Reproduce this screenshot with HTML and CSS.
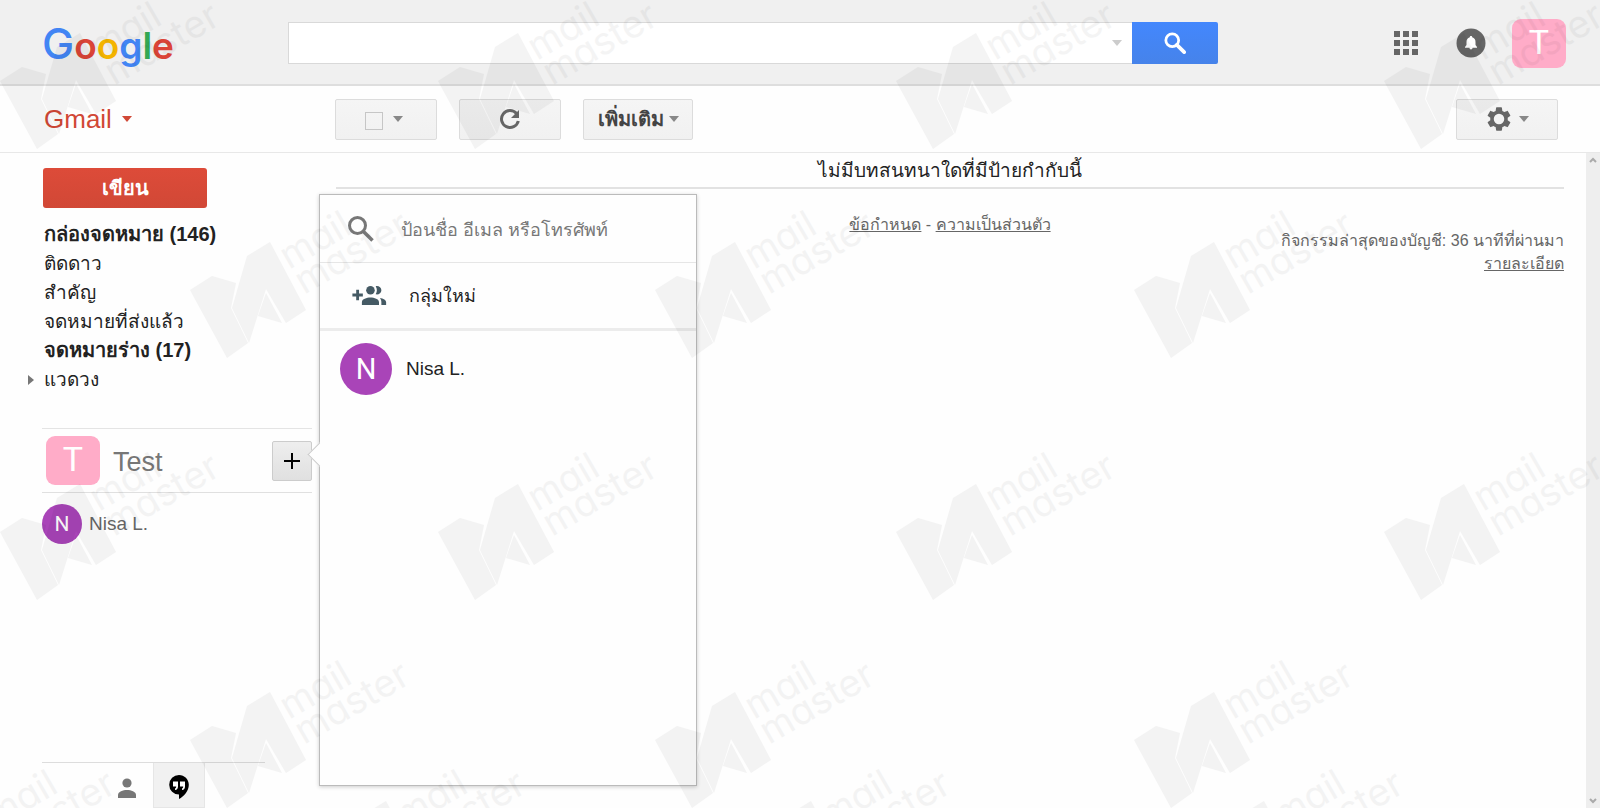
FILE: index.html
```html
<!DOCTYPE html>
<html lang="th">
<head>
  <meta charset="UTF-8">
  <meta name="viewport" content="width=device-width, initial-scale=1.0">
  <title>Gmail</title>
  <link rel="stylesheet" href="styles.css">
</head>
<body>
  <header class="header">
    <a href="#" class="logo" aria-label="Google"><span class="blue capital">G</span><span class="red">o</span><span class="yellow">o</span><span class="blue">g</span><span class="green">l</span><span class="red">e</span></a>
    <form class="search">
      <div class="search-box">
        <input type="text" aria-label="ค้นหา">
        <button type="button" class="search-more" aria-label="ตัวเลือกการค้นหา"><span class="caret light"></span></button>
      </div>
      <button type="button" class="search-btn" aria-label="ค้นหา">
        <svg width="22" height="22" viewBox="0 0 24 24" fill="none" stroke="#fff"><circle cx="9" cy="9" r="7" stroke-width="3"/><path d="M14 14l8 8" stroke-width="4" stroke-linecap="round"/></svg>
      </button>
    </form>
    <div class="header-right">
      <a href="#" aria-label="แอป">
        <svg class="icon" width="24" height="24" viewBox="0 0 24 24" fill="#666"><path d="M0 0h6v6H0zM9 0h6v6H9zM18 0h6v6h-6zM0 9h6v6H0zM9 9h6v6H9zM18 9h6v6h-6zM0 18h6v6H0zM9 18h6v6H9zM18 18h6v6h-6z"/></svg>
      </a>
      <a href="#" aria-label="การแจ้งเตือน">
        <svg class="icon" width="30" height="30" viewBox="0 0 30 30"><circle cx="15" cy="15" r="14.5" fill="#666"/><path fill="#fff" d="M15 8c.8 0 1.200.5 1.200 1.200 2.200.6 3.300 2.300 3.300 4.500v3.300l1.500 2v.8H9v-.8l1.500-2v-3.300c0-2.200 1.100-3.900 3.300-4.500 0-.7.400-1.200 1.200-1.200zM13.500 19.800h3c0 1-.6 1.700-1.500 1.700s-1.500-.7-1.500-1.700z"/></svg>
      </a>
      <a href="#" class="avatar square">T</a>
    </div>
  </header>

  <div class="toolbar">
    <a href="#" class="gmail">Gmail <span class="caret red-caret"></span></a>
    <div class="tools">
      <div class="tool select">
        <input type="checkbox" class="check" aria-label="เลือก">
        <button type="button" class="bare" aria-label="ตัวเลือก"><span class="caret"></span></button>
      </div>
      <button type="button" class="tool" aria-label="รีเฟรช">
        <svg width="22" height="22" viewBox="0 0 22 22"><path d="M17.500 5.500A8.500 8.500 0 1 0 19.300 13" fill="none" stroke="#666" stroke-width="3"/><path d="M20 2v8h-8z" fill="#666"/></svg>
      </button>
      <button type="button" class="tool more">เพิ่มเติม <span class="caret"></span></button>
    </div>
    <button type="button" class="tool settings" aria-label="การตั้งค่า">
      <svg width="28" height="28" viewBox="0 0 24 24" fill="#666"><path d="M19.430 12.980c.04-.32.070-.64.070-.98s-.03-.66-.07-.98l2.110-1.650c.19-.15.240-.42.120-.64l-2-3.460c-.12-.22-.39-.3-.61-.22l-2.490 1c-.52-.4-1.080-.73-1.690-.98l-.38-2.650C14.460 2.180 14.250 2 14 2h-4c-.25 0-.46.180-.49.420l-.38 2.650c-.61.250-1.170.590-1.690.980l-2.490-1c-.23-.09-.49 0-.61.220l-2 3.460c-.13.220-.07.490.120.640l2.110 1.650c-.04.320-.07.650-.07.980s.03.660.070.980l-2.110 1.650c-.19.150-.24.420-.12.640l2 3.460c.12.220.390.300.610.220l2.490-1c.52.400 1.080.730 1.690.980l.38 2.650c.03.240.240.420.490.420h4c.25 0 .46-.18.490-.42l.38-2.650c.61-.25 1.170-.59 1.690-.98l2.490 1c.23.090.490 0 .61-.22l2-3.460c.12-.22.070-.49-.12-.64l-2.110-1.650zM12 16.500a4.500 4.500 0 1 1 0-9 4.500 4.500 0 0 1 0 9z"/></svg>
      <span class="caret"></span>
    </button>
  </div>

  <div class="content">
    <aside class="sidebar">
      <button type="button" class="compose">เขียน</button>
      <nav class="folders">
        <a href="#" class="unread">กล่องจดหมาย (146)</a>
        <a href="#">ติดดาว</a>
        <a href="#">สำคัญ</a>
        <a href="#">จดหมายที่ส่งแล้ว</a>
        <a href="#" class="unread">จดหมายร่าง (17)</a>
        <a href="#" class="expand">แวดวง</a>
      </nav>
      <div class="chat-user">
        <span class="avatar square">T</span>
        <span class="chat-name">Test</span>
        <button type="button" class="add" aria-label="เริ่มแชท">
          <svg width="16" height="16" viewBox="0 0 16 16" fill="#000"><path d="M7 0h2v7h7v2H9v7H7V9H0V7h7z"/></svg>
        </button>
      </div>
      <a href="#" class="chat-item"><span class="avatar round">N</span>Nisa L.</a>
      <div class="chat-tabs">
        <button type="button" class="tab" aria-label="รายชื่อติดต่อ">
          <svg width="18" height="20" viewBox="0 0 18 20" fill="#777"><circle cx="9" cy="5" r="4.600"/><path d="M0 20v-3c0-3.500 5-5 9-5s9 1.500 9 5v3z"/></svg>
        </button>
        <button type="button" class="tab active" aria-label="แฮงเอาท์">
          <svg width="20" height="24" viewBox="0 0 20 24"><path d="M10 0a9.800 9.800 0 0 0 0 19.600V24c5-2.500 9.800-8 9.800-14.200C19.800 4.400 15.400 0 10 0z"/><path fill="#fff" d="M4 6.500h5v5c0 2-1 3.300-3 3.500v-1.500c.8-.2 1.200-.8 1.200-2H4zM11 6.500h5v5c0 2-1 3.300-3 3.500v-1.500c.8-.2 1.200-.8 1.200-2H11z"/></svg>
        </button>
      </div>
    </aside>

    <main class="main">
      <p class="empty">ไม่มีบทสนทนาใดที่มีป้ายกำกับนี้</p>
      <div class="footer">
        <p class="terms"><a href="#">ข้อกำหนด</a> - <a href="#">ความเป็นส่วนตัว</a></p>
        <p class="activity">กิจกรรมล่าสุดของบัญชี: 36 นาทีที่ผ่านมา<br><a href="#">รายละเอียด</a></p>
      </div>
    </main>

    <div class="scrollbar">
      <svg width="8" height="6" viewBox="0 0 8 6" fill="none" stroke="#aaa" stroke-width="2"><path d="M1 5l3-3 3 3"/></svg>
      <svg width="8" height="6" viewBox="0 0 8 6" fill="none" stroke="#aaa" stroke-width="2"><path d="M1 1l3 3 3-3"/></svg>
    </div>

    <div class="popup">
      <div class="popup-search">
        <svg width="26" height="26" viewBox="0 0 26 26" fill="none" stroke="#777"><circle cx="9.500" cy="9.500" r="8" stroke-width="3"/><path d="M15.500 15.500l9 9" stroke-width="3.500"/></svg>
        <input type="text" aria-label="ค้นหาผู้ติดต่อ" placeholder="ป้อนชื่อ อีเมล หรือโทรศัพท์">
      </div>
      <button type="button" class="new-group">
        <svg width="35" height="19" viewBox="0 0 36 20" fill="#455a64"><path d="M4 4h3v4h4v3H7v4H4v-4H0V8h4z"/><circle cx="19" cy="4.500" r="4.500"/><path d="M10 20v-3c0-3.500 5-5 9-5s9 1.500 9 5v3zM24.500.2c3-.8 6 1.300 6 4.300s-3 5.100-6 4.300c1.700-2.600 1.700-6 0-8.600zM29 12.500c3.500.5 6.500 2 6.500 4.500v3h-5v-3c0-1.800-.5-3.300-1.500-4.500z"/></svg>
        กลุ่มใหม่
      </button>
      <a href="#" class="contact"><span class="avatar round large">N</span>Nisa L.</a>
    </div>
  </div>

  <svg class="watermark" aria-hidden="true">
    <defs>
      <g id="mark">
        <path d="M0 80l22-14 24 7-5 25 17 35-21 15zM57 46l23-14 36 68-20 13-20-34-17 54-17-35zM76 83l16 30-24-7z"/>
        <text transform="translate(99 60) rotate(-30)">mail</text>
        <text transform="translate(114 85) rotate(-30)">master</text>
      </g>
    </defs>
    <use href="#mark" x="0" y="1"/>
    <use href="#mark" x="438" y="1"/>
    <use href="#mark" x="896" y="1"/>
    <use href="#mark" x="1384" y="1"/>
    <use href="#mark" x="190" y="210"/>
    <use href="#mark" x="655" y="210"/>
    <use href="#mark" x="1134" y="210"/>
    <use href="#mark" x="0" y="452"/>
    <use href="#mark" x="438" y="452"/>
    <use href="#mark" x="896" y="452"/>
    <use href="#mark" x="1384" y="452"/>
    <use href="#mark" x="190" y="660"/>
    <use href="#mark" x="655" y="660"/>
    <use href="#mark" x="1134" y="660"/>
    <use href="#mark" x="-104" y="769"/>
    <use href="#mark" x="306" y="769"/>
    <use href="#mark" x="731" y="769"/>
    <use href="#mark" x="1184" y="769"/>
  </svg>
</body>
</html>
```
FILE: styles.css
```css
* {
  margin: 0;
  padding: 0;
  box-sizing: border-box;
}
body {
  min-height: 100vh;
  display: flex;
  flex-direction: column;
  position: relative;
  background: #fefefe;
  color: #222;
  font-family: "Liberation Sans", "Noto Sans", sans-serif;
  font-size: 18px;
  overflow: hidden;
}
a {
  color: inherit;
  text-decoration: none;
}
button, input {
  font: inherit;
  color: inherit;
  border: none;
  background: none;
}
button {
  cursor: pointer;
}
svg {
  display: block;
  flex-shrink: 0;
}
.caret {
  display: inline-block;
  border: 5px solid transparent;
  border-top: 6px solid #888;
  border-bottom: none;
}
.caret.light {
  border-top-color: #ccc;
}
.caret.red-caret {
  border-top-color: #d14836;
}

/* header */
.header {
  display: flex;
  align-items: center;
  height: 86px;
  padding: 2px 34px 0 42px;
  background: #f0f0f0;
  border-bottom: 2px solid #dedede;
}
.logo {
  width: 246px;
  font-family: Inter, sans-serif;
  font-size: 37px;
  font-weight: 600;
}
.logo .capital {
  font-size: 43px;
  font-weight: 500;
}
.blue { color: #4285f4; }
.red { color: #db4437; }
.yellow { color: #f4b400; }
.green { color: #34a853; }
.search {
  display: flex;
  width: 930px;
  height: 42px;
}
.search-box {
  flex: 1;
  display: flex;
  background: #fff;
  border: 1px solid #d9d9d9;
  border-right: none;
}
.search-box input {
  flex: 1;
  padding: 0 8px;
  outline: none;
}
.search-more {
  display: flex;
  align-items: center;
  justify-content: center;
  width: 30px;
}
.search-btn {
  width: 86px;
  display: flex;
  align-items: center;
  justify-content: center;
  background: linear-gradient(#4387fd, #4683ea);
  border-radius: 0 2px 2px 0;
}
.header-right {
  display: flex;
  align-items: center;
  margin-left: auto;
  gap: 38px;
}
.header-right .avatar {
  margin-left: -12px;
}
.avatar {
  display: flex;
  align-items: center;
  justify-content: center;
  flex-shrink: 0;
  color: #fff;
  font-family: Roboto, sans-serif;
}
.avatar.square {
  width: 54px;
  height: 49px;
  padding-bottom: 3px;
  border-radius: 9px;
  background: #ffacc8;
  font-size: 34px;
}
.avatar.round {
  width: 40px;
  height: 40px;
  border-radius: 50%;
  background: #a944b8;
  font-size: 21px;
}
.avatar.large {
  width: 52px;
  height: 52px;
  font-size: 29px;
}

/* toolbar */
.toolbar {
  display: flex;
  align-items: center;
  height: 67px;
  padding: 0 42px 0 44px;
  border-bottom: 1px solid #e8e8e8;
}
.gmail {
  display: flex;
  align-items: center;
  gap: 10px;
  width: 291px;
  color: #d14836;
  font-size: 26px;
}
.tools {
  display: flex;
  gap: 22px;
}
.tool {
  display: flex;
  align-items: center;
  justify-content: center;
  gap: 10px;
  width: 102px;
  height: 41px;
  background: linear-gradient(#f5f5f5, #f1f1f1);
  border: 1px solid #dcdcdc;
  border-radius: 2px;
}
.tool.select {
  padding-right: 4px;
}
.tool.more {
  width: 110px;
  gap: 5px;
  color: #444;
  font-size: 20px;
  font-weight: bold;
}
.tool.settings {
  margin-left: auto;
  gap: 6px;
}
.check {
  appearance: none;
  width: 18px;
  height: 18px;
  margin-top: 4px;
  border: 1px solid #c6c6c6;
}
.bare {
  display: flex;
}

/* content */
.content {
  flex: 1;
  display: flex;
  position: relative;
}
.sidebar {
  width: 312px;
  padding: 15px 0 0 42px;
  display: flex;
  flex-direction: column;
}
.compose {
  width: 164px;
  height: 40px;
  margin-left: 1px;
  color: #fff;
  font-size: 20px;
  font-weight: bold;
  background: linear-gradient(#dd4b39, #d14836);
  border-radius: 3px;
}
.folders {
  display: flex;
  flex-direction: column;
  margin-top: 12px;
  padding-left: 2px;
}
.folders a {
  height: 29px;
  line-height: 29px;
  font-size: 19px;
  white-space: nowrap;
}
.folders .unread {
  font-weight: bold;
  font-size: 20px;
}
.folders .expand {
  display: flex;
  align-items: center;
  margin-left: -16px;
}
.expand::before {
  content: "";
  margin-right: 10px;
  border: 5px solid transparent;
  border-left: 6px solid #777;
  border-right: none;
}
.chat-user {
  display: flex;
  align-items: center;
  height: 65px;
  margin-top: 34px;
  padding-left: 4px;
  border-top: 1px solid #e4e4e4;
  border-bottom: 1px solid #e0e0e0;
}
.chat-name {
  margin-left: 13px;
  padding-top: 3px;
  color: #777;
  font-size: 27px;
}
.add {
  display: flex;
  align-items: center;
  justify-content: center;
  width: 40px;
  height: 40px;
  margin-left: auto;
  background: linear-gradient(#eee, #e0e0e0);
  border: 1px solid #ccc;
  border-radius: 2px;
}
.chat-item {
  display: flex;
  align-items: center;
  gap: 7px;
  margin-top: 11px;
  color: #666;
  font-size: 19px;
}
.chat-tabs {
  display: flex;
  width: 223px;
  height: 46px;
  margin-top: auto;
  padding-left: 59px;
  border-top: 1px solid #ddd;
}
.tab {
  display: flex;
  align-items: center;
  justify-content: center;
  width: 52px;
  padding-top: 4px;
}
.tab.active {
  background: #f1f1f1;
  border: 1px solid #e6e6e6;
  border-top: none;
}
.main {
  flex: 1;
  padding: 0 22px 0 24px;
}
.empty {
  height: 36px;
  line-height: 36px;
  font-size: 19px;
  text-align: center;
  border-bottom: 2px solid #e2e2e2;
}
.footer {
  display: grid;
  color: #666;
  font-size: 16px;
  line-height: 23px;
}
.footer a {
  text-decoration: underline;
}
.terms {
  grid-area: 1 / 1;
  margin-top: 24px;
  text-align: center;
}
.activity {
  grid-area: 1 / 1;
  margin-top: 40px;
  text-align: right;
}
.scrollbar {
  display: flex;
  flex-direction: column;
  justify-content: space-between;
  align-items: center;
  width: 14px;
  padding: 4px 0;
  background: #eee;
}

/* hangouts popup, over the page */
.popup {
  position: absolute;
  top: 41px;
  bottom: 22px;
  left: 319px;
  width: 378px;
  background: #fefefe;
  border: 1px solid #bbb;
  box-shadow: 0 1px 4px rgba(0, 0, 0, 0.2);
}
.popup::before {
  content: "";
  position: absolute;
  top: 251px;
  left: -9px;
  width: 16px;
  height: 16px;
  background: #fefefe;
  border: 1px solid #ccc;
  border-top: none;
  border-right: none;
  transform: rotate(45deg);
}
.popup-search {
  display: flex;
  align-items: center;
  gap: 27px;
  height: 68px;
  padding-left: 28px;
  border-bottom: 1px solid #e6e6e6;
}
.popup-search input {
  flex: 1;
  min-width: 0;
  height: 40px;
  padding-top: 3px;
  outline: none;
}
.popup-search input::placeholder {
  color: #777;
  opacity: 1;
}
.new-group {
  display: flex;
  align-items: center;
  gap: 22px;
  width: 100%;
  height: 68px;
  padding-left: 32px;
  border-bottom: 3px solid #ececec;
}
.contact {
  display: flex;
  align-items: center;
  gap: 14px;
  padding: 12px 20px;
  font-size: 19px;
}

.watermark {
  position: absolute;
  top: 0;
  left: 0;
  width: 100%;
  height: 100%;
  pointer-events: none;
  opacity: 0.04;
  font-family: Inter, sans-serif;
  font-size: 38px;
  font-weight: 400;
  font-feature-settings: "cv11";
}
```
